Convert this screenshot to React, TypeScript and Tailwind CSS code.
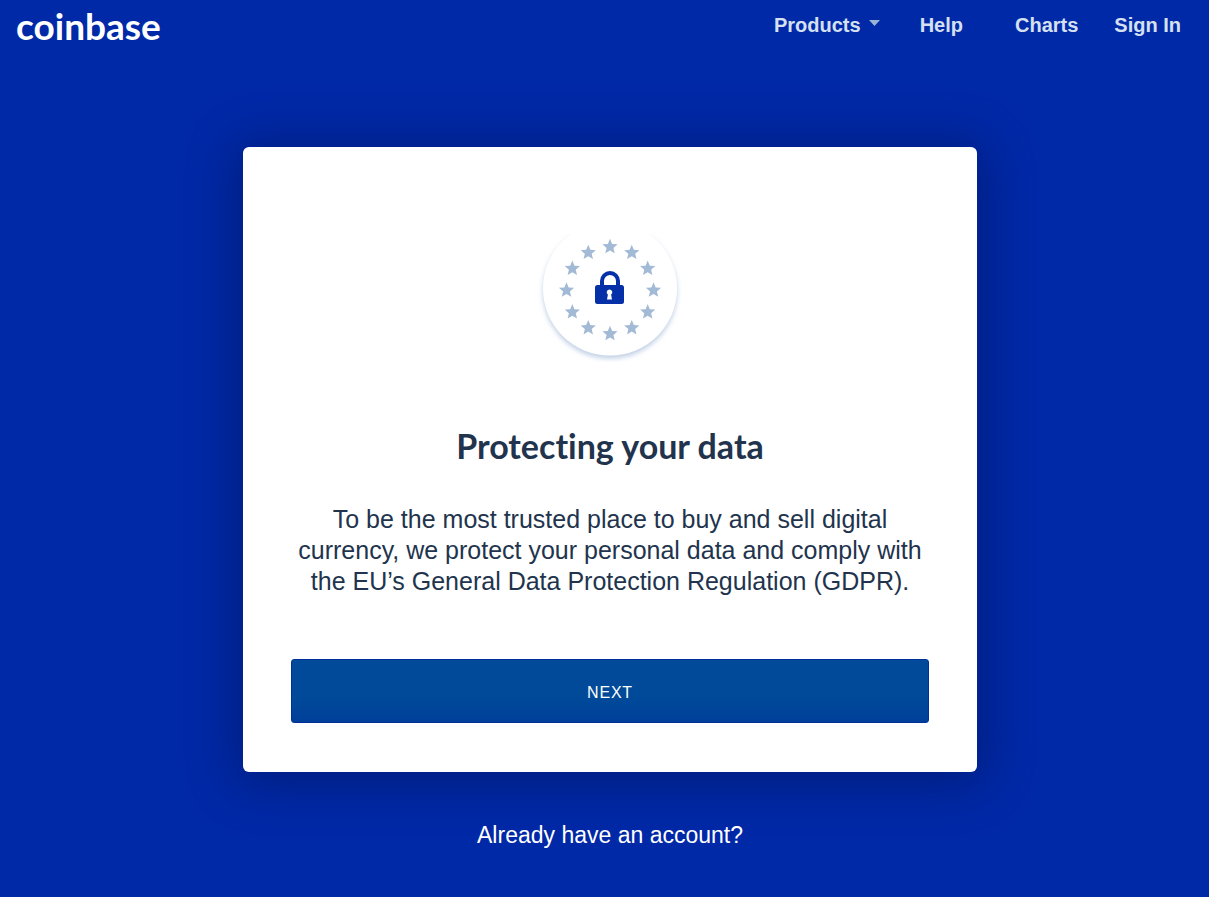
const STAR_COUNT = 12;

function starPoints(cx: number, cy: number): string {
  return Array.from({ length: 10 }, (_, i) => {
    const radius = i % 2 === 0 ? 8 : 3.6;
    const angle = (Math.PI / 5) * i - Math.PI / 2;
    return `${(cx + radius * Math.cos(angle)).toFixed(2)},${(cy + radius * Math.sin(angle)).toFixed(2)}`;
  }).join(" ");
}

function PrivacySeal() {
  return (
    <svg className="h-36 w-36" viewBox="0 0 144 144" aria-hidden="true">
      <defs>
        <clipPath id="seal-clip">
          <rect x="0" y="16" width="144" height="128" />
        </clipPath>
        <filter id="seal-shadow" x="-10%" y="-10%" width="120%" height="125%">
          <feDropShadow dx="0" dy="3" stdDeviation="2.5" floodColor="#a9c0dc" floodOpacity="0.75" />
        </filter>
      </defs>
      <g clipPath="url(#seal-clip)">
        <circle cx="72" cy="70.500" r="67" fill="#ffffff" filter="url(#seal-shadow)" />
      </g>
      {Array.from({ length: STAR_COUNT }, (_, i) => {
        const angle = ((Math.PI * 2) / STAR_COUNT) * i;
        return (
          <polygon
            key={i}
            points={starPoints(72 + 43.5 * Math.sin(angle), 72.3 - 43.5 * Math.cos(angle))}
            fill="#a3bad6"
          />
        );
      })}
      <path d="M64 68v-5a8 8 0 0 1 16 0v5" fill="none" stroke="#0530a8" strokeWidth="4" />
      <rect x="57" y="67" width="29" height="19" rx="2.5" fill="#0530a8" />
      <path d="M71.500 71.500a2.800 2.800 0 0 1 1.600 5.100l.9 4.900h-5l.9-4.900a2.800 2.800 0 0 1 1.600-5.100z" fill="#ffffff" />
    </svg>
  );
}

export default function App() {
  return (
    <div className="flex min-h-screen flex-col bg-[#0029a8] font-['Liberation_Sans',Arial,sans-serif]">
      <header className="flex items-start justify-between pr-7 pl-4">
        <a href="#home" className="font-[Lato,sans-serif] text-[37px] leading-[52px] font-bold text-white">
          coinbase
        </a>
        <nav className="flex items-center pt-[11px] text-[20px] leading-7 font-bold text-[#d5e0f0]">
          <button type="button" className="mr-10 flex items-center gap-2">
            Products
            <svg className="mb-1 h-[6px] w-[11px]" viewBox="0 0 11 6" aria-hidden="true">
              <path d="M0 0h11L5.500 6z" fill="#9ab4d6" />
            </svg>
          </button>
          <a href="#help" className="mr-13">Help</a>
          <a href="#charts" className="mr-9">Charts</a>
          <a href="#sign-in">Sign In</a>
        </nav>
      </header>

      <main className="flex flex-col items-center pt-[95px] pb-8 pl-[11px]">
        <section className="flex w-full max-w-[734px] flex-col items-center rounded-md bg-white px-12 pt-[71px] pb-[49px] text-center text-[#22344d] shadow-[0_4px_50px_10px_rgba(0,18,80,0.45)]">
          <PrivacySeal />
          <h1 className="mt-16 font-[Lato,sans-serif] text-[34px] leading-10 font-bold [font-variant-ligatures:none]">
            Protecting your data
          </h1>
          <p className="mt-[38px] text-[25px] leading-[31px]">
            To be the most trusted place to buy and sell digital currency, we protect your personal data and comply with
            the EU’s General Data Protection Regulation (GDPR).
          </p>
          <button
            type="button"
            className="mt-[62px] h-16 w-full rounded-[3px] border border-[#00309a] bg-linear-to-b from-[#004a99] from-60% to-[#003f99] pt-1 text-[16px] tracking-wider text-white"
          >
            NEXT
          </button>
        </section>
        <a href="#sign-in" className="mt-[47px] text-[23px] leading-8 text-white">
          Already have an account?
        </a>
      </main>
    </div>
  );
}
